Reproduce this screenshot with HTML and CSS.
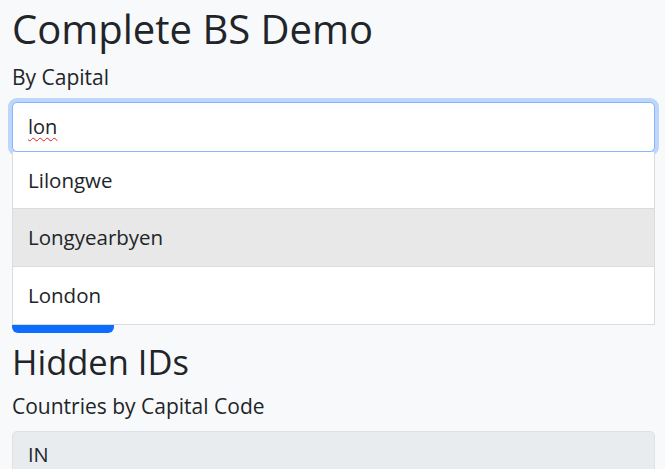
FILE: index.html
```html
<!DOCTYPE html>
<html lang="en">
<head>
<meta charset="utf-8">
<title>Complete BS Demo</title>
<link rel="stylesheet" href="styles.css">
</head>
<body>
<main class="container">
  <h1 class="title">Complete BS Demo</h1>
  <section class="field">
    <label class="field-label">By Capital</label>
    <div class="typeahead">
      <div class="form-control focused" role="textbox"><span class="misspelled">lon</span></div>
      <ul class="dropdown">
        <li class="dropdown-item">Lilongwe</li>
        <li class="dropdown-item active">Longyearbyen</li>
        <li class="dropdown-item">London</li>
      </ul>
    </div>
    <button class="btn-primary" type="button">Submit</button>
  </section>
  <h2 class="subtitle">Hidden IDs</h2>
  <section class="field">
    <label class="field-label">Countries by Capital Code</label>
    <div class="form-control readonly">IN</div>
  </section>
</main>
</body>
</html>
```
FILE: styles.css
```css
html, body {
  margin: 0;
  padding: 0;
  background: #f8f9fa;
  color: #212529;
  font-family: "Open Sans", "Noto Sans", sans-serif;
}
.container {
  padding: 0 10px 0 12px;
}
.title {
  margin: 0;
  padding-top: 5px;
  font-size: 40px;
  font-weight: 400;
  line-height: 48px;
}
.subtitle {
  margin: 9px 0 0;
  font-size: 34.5px;
  font-weight: 400;
  line-height: 40px;
}
.field-label {
  display: block;
  font-size: 21px;
  line-height: 28px;
  margin: 10px 0 11px;
}
.typeahead {
  position: relative;
}
.form-control {
  box-sizing: border-box;
  height: 50px;
  padding: 0 15px;
  font-size: 20px;
  line-height: 48px;
  background: #fff;
  border: 1px solid #ced4da;
  border-radius: 5px;
}
.form-control.focused {
  border-color: #86b7fe;
  box-shadow: 0 0 0 4px rgba(13, 110, 253, 0.25);
}
.form-control.readonly {
  background: #e9ecef;
  border-color: #dee2e6;
  line-height: 46px;
}
.misspelled {
  text-decoration: underline wavy #e02020;
  text-decoration-thickness: 1px;
  text-underline-offset: 3px;
}
.dropdown {
  position: absolute;
  top: 100%;
  left: 0;
  right: 0;
  z-index: 10;
  margin: 0;
  padding: 0;
  list-style: none;
  background: #fff;
  border: 1px solid #dcdcdc;
  border-top: 0;
}
.dropdown-item {
  height: 57px;
  padding: 0 15px;
  font-size: 20.5px;
  line-height: 57px;
  border-top: 1px solid #dcdcdc;
}
.dropdown-item:first-child {
  height: 56px;
  line-height: 56px;
  border-top: 0;
}
.dropdown-item.active {
  background: #e8e8e8;
}
.btn-primary {
  display: block;
  margin-top: 133px;
  width: 102px;
  height: 48px;
  border: 0;
  border-radius: 6px;
  background: #0d6efd;
  color: #fff;
  font: inherit;
  font-size: 20px;
}
```
